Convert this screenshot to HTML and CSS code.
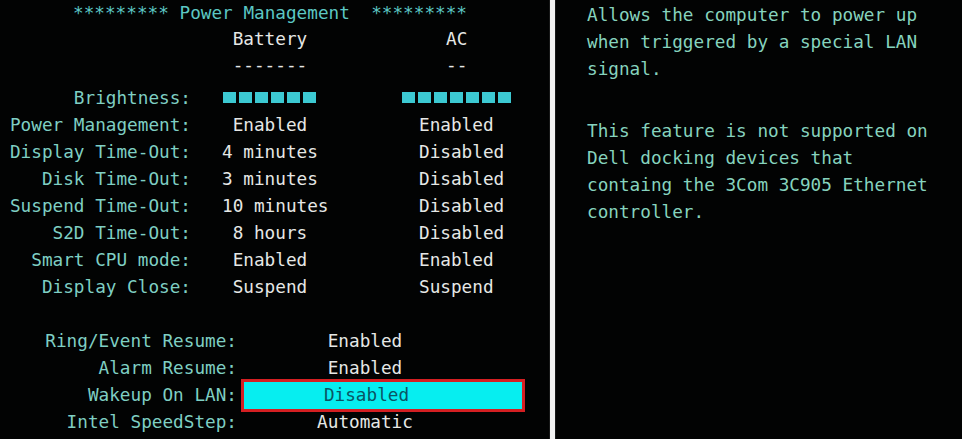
FILE: index.html
```html
<!DOCTYPE html>
<html lang="en">
<head>
    <meta charset="UTF-8">
    <meta name="viewport" content="width=device-width, initial-scale=1.0">
    <title>Power Management</title>
    <link rel="stylesheet" href="styles.css">
</head>
<body>
    <div class="screen">
        <div class="setup">
            <div class="title">********* Power Management  *********</div>

            <div class="table head">
                <div class="label"></div>
                <div class="val"> Battery</div>
                <div class="val ac-head">AC</div>
                <div class="label"></div>
                <div class="val"> -------</div>
                <div class="val ac-head">--</div>
            </div>

            <div class="table body">
                <div class="label">Brightness:</div>
                <div class="val"><span class="bar bar-batt">
                    <i></i><i></i><i></i><i></i><i></i><i></i>
                </span></div>
                <div class="val"><span class="bar bar-ac">
                    <i></i><i></i><i></i><i></i><i></i><i></i><i></i>
                </span></div>

                <div class="label">Power Management:</div>
                <div class="val"> Enabled</div>
                <div class="val">Enabled</div>

                <div class="label">Display Time-Out:</div>
                <div class="val">4 minutes</div>
                <div class="val">Disabled</div>

                <div class="label">Disk Time-Out:</div>
                <div class="val">3 minutes</div>
                <div class="val">Disabled</div>

                <div class="label">Suspend Time-Out:</div>
                <div class="val">10 minutes</div>
                <div class="val">Disabled</div>

                <div class="label">S2D Time-Out:</div>
                <div class="val"> 8 hours</div>
                <div class="val">Disabled</div>

                <div class="label">Smart CPU mode:</div>
                <div class="val"> Enabled</div>
                <div class="val">Enabled</div>

                <div class="label">Display Close:</div>
                <div class="val"> Suspend</div>
                <div class="val">Suspend</div>
            </div>

            <div class="resume">
                <div class="label">Ring/Event Resume:</div>
                <div class="val">Enabled</div>

                <div class="label">Alarm Resume:</div>
                <div class="val">Enabled</div>

                <div class="label">Wakeup On LAN:</div>
                <div class="val selected">Disabled</div>

                <div class="label">Intel SpeedStep:</div>
                <div class="val">Automatic</div>
            </div>
        </div>

        <div class="divider"></div>

        <div class="help">
            <p>Allows the computer to power up<br>when triggered by a special LAN<br>signal.</p>
            <p>This feature is not supported on<br>Dell docking devices that<br>containg the 3Com 3C905 Ethernet<br>controller.</p>
        </div>
    </div>
</body>
</html>
```

FILE: styles.css
```css
html, body {
    margin: 0;
    padding: 0;
    background: #000;
}
body {
    font-family: "DejaVu Sans Mono", "Liberation Mono", monospace;
    font-size: 17.7px;
    color: #e4e6e4;
}
.screen {
    display: flex;
    width: 962px;
    height: 439px;
    overflow: hidden;
    background: #020303;
}
.setup {
    width: 550px;
    flex: none;
}
.title {
    color: #5cc7c4;
    white-space: pre;
    line-height: 26px;
    padding-left: 73px;
}
.table {
    display: grid;
    grid-template-columns: 222px 197px 1fr;
}
.head {
    line-height: 26px;
}
.body {
    margin-top: 7px;
    line-height: 27px;
}
.label {
    text-align: right;
    padding-right: 31px;
    color: #7fcfc3;
    white-space: pre;
}
.val {
    white-space: pre;
    color: #e6e8e6;
}
.ac-head {
    padding-left: 27px;
}
.bar {
    display: inline-flex;
    gap: 3px;
    vertical-align: middle;
    position: relative;
    top: -2px;
}
.bar i {
    display: block;
    width: 13px;
    height: 11px;
    background: #3cc9d2;
}
.bar-batt {
    margin-left: 1px;
}
.bar-ac {
    margin-left: -17px;
}
.resume {
    display: grid;
    grid-template-columns: 241px 284px;
    margin-top: 27px;
    line-height: 27px;
}
.resume .label {
    padding-right: 4px;
}
.resume .val {
    text-align: center;
    padding-right: 36px;
}
.resume .selected {
    margin: -3px 0;
    height: 33px;
    box-sizing: border-box;
    border: 3px solid #d41f22;
    background: #06eef0;
    color: #0a5564;
    padding-right: 33px;
}
.divider {
    width: 5px;
    flex: none;
    background: #f2f2f2;
    box-shadow: 0 0 1px #888;
}
.help {
    padding-left: 32px;
    padding-top: 2px;
    color: #86d3be;
    line-height: 27px;
}
.help p {
    margin: 0 0 35px;
    white-space: nowrap;
}
```
